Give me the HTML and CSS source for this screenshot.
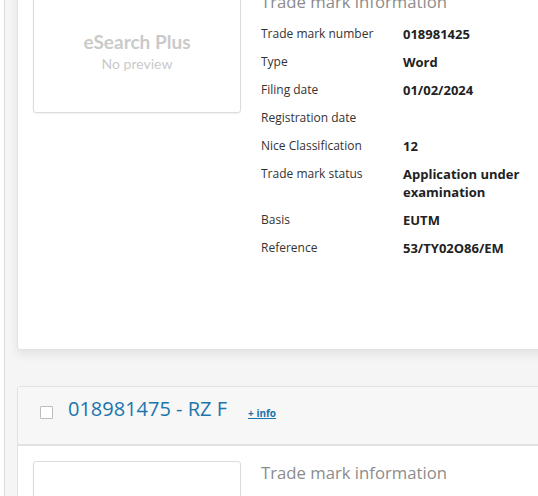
FILE: index.html
```html
<!DOCTYPE html>
<html lang="en">
<head>
<meta charset="utf-8">
<title>eSearch Plus results</title>
<link rel="stylesheet" href="styles.css">
</head>
<body>
<div class="panel">
  <div class="card card-first">
    <div class="card-body">
      <div class="preview">
        <div class="preview-brand">eSearch Plus</div>
        <div class="preview-note">No preview</div>
      </div>
      <div class="info">
        <h3 class="info-title">Trade mark information</h3>
        <dl class="rows">
          <div class="row"><dt>Trade mark number</dt><dd>018981425</dd></div>
          <div class="row"><dt>Type</dt><dd>Word</dd></div>
          <div class="row"><dt>Filing date</dt><dd>01/02/2024</dd></div>
          <div class="row"><dt>Registration date</dt><dd></dd></div>
          <div class="row"><dt>Nice Classification</dt><dd>12</dd></div>
          <div class="row"><dt>Trade mark status</dt><dd>Application under<br>examination</dd></div>
          <div class="row"><dt>Basis</dt><dd>EUTM</dd></div>
          <div class="row"><dt>Reference</dt><dd>53/TY02O86/EM</dd></div>
        </dl>
      </div>
    </div>
  </div>

  <div class="card card-second">
    <div class="card-header">
      <span class="checkbox"></span>
      <a class="result-title" href="#">018981475 - RZ F</a>
      <a class="more-info" href="#">+ info</a>
    </div>
    <div class="card-body">
      <div class="preview">
        <div class="preview-brand">eSearch Plus</div>
        <div class="preview-note">No preview</div>
      </div>
      <div class="info">
        <h3 class="info-title">Trade mark information</h3>
      </div>
    </div>
  </div>
</div>
</body>
</html>
```

FILE: styles.css
```css
html, body {
  margin: 0;
  padding: 0;
  background: #ffffff;
  overflow: hidden;
  height: 496px;
}

body {
  font-family: "Open Sans", "Liberation Sans", sans-serif;
  color: #333;
}

.panel {
  margin-left: 4px;
  margin-top: -26px;
  width: 820px;
  min-height: 700px;
  border-left: 1px solid #dcdcdc;
  background: #f5f5f5;
  padding-left: 12px;
  box-sizing: border-box;
}

.card {
  background: #fff;
  border: 1px solid #e2e2e2;
  border-radius: 3px;
}

.card-first {
  box-shadow: 0 5px 10px rgba(0, 0, 0, 0.07);
  height: 376px;
  box-sizing: border-box;
}

.card-second {
  margin-top: 36px;
}

.card-body {
  display: flex;
  padding: 15px;
}

.preview {
  width: 208px;
  height: 123px;
  box-sizing: border-box;
  border: 1px solid #dcdcdc;
  border-radius: 3px;
  box-shadow: 0 1px 2px rgba(0, 0, 0, 0.06);
  display: flex;
  flex-direction: column;
  align-items: center;
  justify-content: center;
  flex-shrink: 0;
}

.preview-brand {
  font-family: "Lato", "Open Sans", sans-serif;
  font-weight: 700;
  font-size: 19px;
  line-height: 24px;
  color: #cacaca;
}

.preview-note {
  font-family: "Lato", "Open Sans", sans-serif;
  font-size: 14px;
  line-height: 20px;
  color: #cacaca;
}

.info {
  margin-left: 20px;
}

.info-title {
  margin: 0;
  font-size: 16.7px;
  font-weight: 400;
  line-height: 24px;
  color: #8c8c8c;
}

.rows {
  margin: 11px 0 0 0;
  display: flex;
  flex-direction: column;
  gap: 10px;
}

.row {
  display: flex;
  font-size: 12px;
  line-height: 18px;
  min-height: 18px;
}

.row dt {
  width: 142px;
  color: #333;
}

.row dd {
  margin: 0;
  font-size: 13px;
  font-weight: 700;
  color: #222;
}

.card-header {
  display: flex;
  align-items: center;
  height: 57px;
  background: #f7f7f7;
  border-bottom: 2px solid #e2e2e2;
  padding-left: 22px;
}

.checkbox {
  width: 13px;
  height: 13px;
  box-sizing: border-box;
  border: 1px solid #bdbdbd;
  border-radius: 1px;
  background: #fff;
  margin-bottom: 7px;
}

.result-title {
  margin-left: 15px;
  margin-bottom: 14px;
  font-size: 20px;
  font-weight: 500;
  color: #1a75ad;
  text-decoration: none;
}

.more-info {
  margin-left: 21px;
  margin-bottom: 6px;
  font-size: 10px;
  font-weight: 700;
  color: #1a75ad;
  text-decoration: underline;
}
```
